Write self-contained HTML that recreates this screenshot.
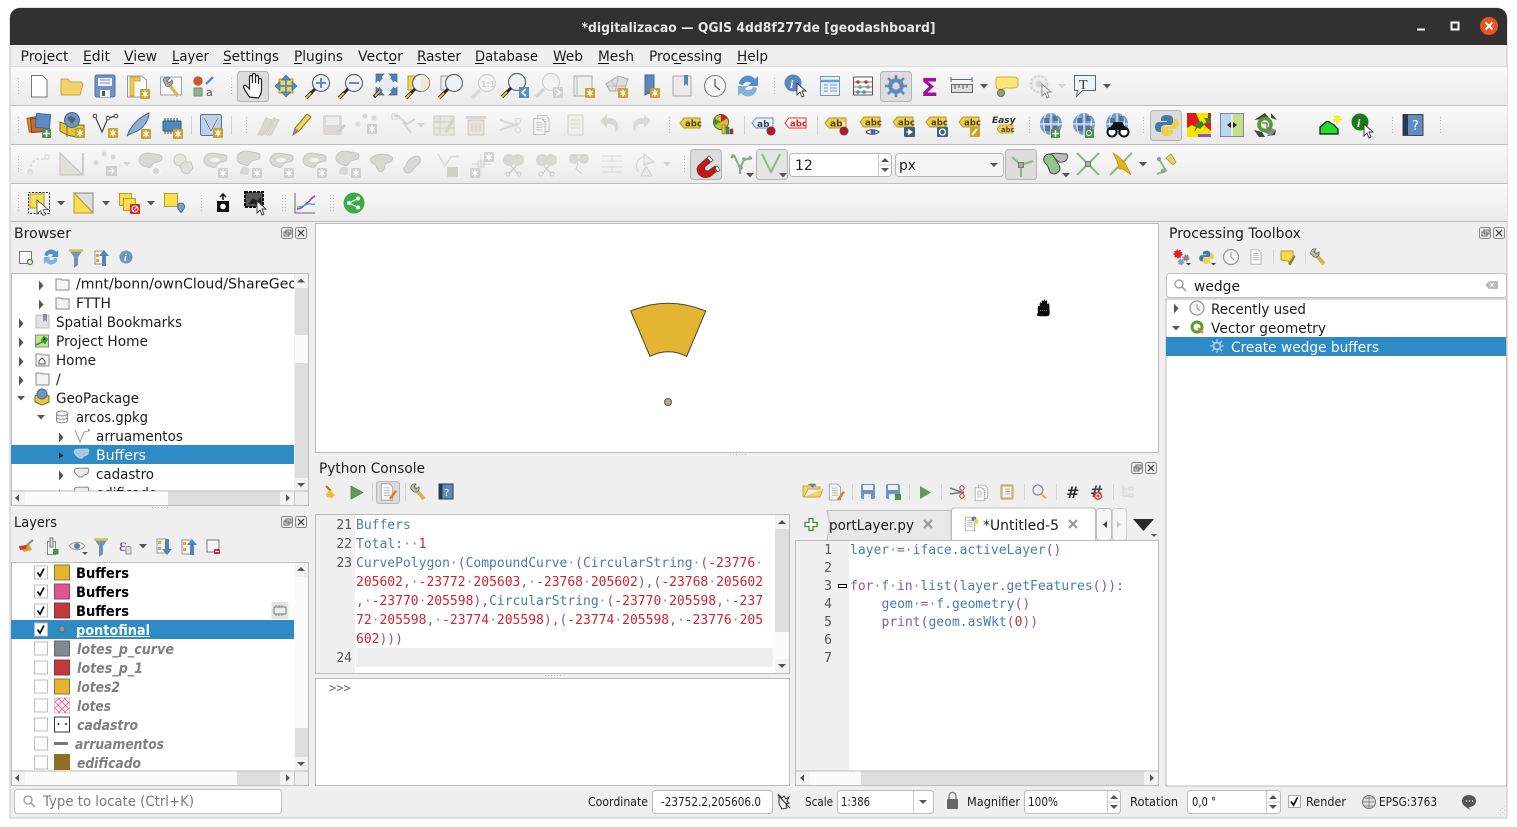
<!DOCTYPE html>
<html lang="en"><head><meta charset="utf-8"><title>QGIS</title>
<style>
html,body{margin:0;padding:0;background:#fff;width:1517px;height:827px;overflow:hidden}
svg{display:block}
text{font-family:"DejaVu Sans","Liberation Sans",sans-serif;font-size:14px;fill:#1c1c1c}
.m text,text.m{font-family:"DejaVu Sans Mono","Liberation Mono",monospace;font-size:13px;white-space:pre}
.s{font-size:12px}
.bl{fill:#4a7ab8}.pu{fill:#8a55a8}.re{fill:#cf2430}.dt{fill:#8a8a8a}
.gi{font-weight:bold;font-style:italic;fill:#7f7f7f;font-size:14px}
</style></head><body>
<svg width="1517" height="827" viewBox="0 0 1517 827" xmlns="http://www.w3.org/2000/svg">
<defs>
<linearGradient id="tb" x1="0" y1="0" x2="0" y2="1"><stop offset="0" stop-color="#f9f9f9"/><stop offset="1" stop-color="#ebebeb"/></linearGradient>
<pattern id="gp" width="3" height="3" patternUnits="userSpaceOnUse"><rect width="1" height="1" fill="#bdbdbd"/></pattern>
<clipPath id="cb"><rect x="11" y="274" width="283" height="217"/></clipPath>
<clipPath id="cl"><rect x="11" y="563" width="283" height="208"/></clipPath>
<clipPath id="ct"><rect x="827" y="508" width="124" height="32"/></clipPath>
<g id="star"><rect width="10" height="10" rx="1" fill="#c9a227"/><path d="M5 1.5v7M2 3l6 4M8 3L2 7" stroke="#fff" stroke-width="1.3"/></g>
<g id="sg"><rect width="10" height="10" rx="1" fill="#cfcfcb"/><path d="M5 1.5v7M2 3l6 4M8 3L2 7" stroke="#fff" stroke-width="1.3"/></g>
<path id="blob" d="M-11-4c3-5 10-4 14-3s8 0 8 4c0 5-5 3-8 5s-3 6-7 4C-10 5-14 1-11-4z" fill="#d8d8d5" stroke="#c6c6c2"/>
<g id="mag"><circle cx="3" cy="-3" r="8.5" fill="#eef1f5" stroke="#666" stroke-width="1.2"/><path d="M-3 3l-4 4" stroke="#222" stroke-width="3"/><path d="M-6 6l-6 6" stroke="#333" stroke-width="3.4"/><path d="M-7 7l-5 5" stroke="#e8c43a" stroke-width="1.8"/></g>
<g id="magd"><circle cx="3" cy="-3" r="8.5" fill="#f3f3f3" stroke="#d0d0d0" stroke-width="1.2"/><path d="M-4 4l-8 8" stroke="#d6d6d6" stroke-width="3.4"/></g>
<g id="lab"><path d="M-10 0l4-5h16v10h-16z" fill="#f0cf45" stroke="#b9952a"/><text x="-5" y="3.5" style="font-size:8.5px;font-weight:bold;fill:#4a4a30">abc</text></g>
<g id="pin"><path d="M0-7v5" stroke="#eee" stroke-width="3"/><circle cy="2" r="4.5" fill="#a5202b"/></g>
<g id="glb"><circle r="11" fill="#6f9bd6"/><path d="M-11 0h22M0-11v22M-5-10C-8-4-8 4-5 10M5-10C8-4 8 4 5 10" stroke="#e6edf7" stroke-width="1.2" fill="none"/><path d="M-7-6h5v5h-5zM2-8h5v5h-5zM-6 2h5v5h-5zM2 2h6v5h-6z" fill="#555" opacity=".6"/></g>
<g id="doc"><path d="M-7-10h10l4 4v16h-14z" fill="#fafafa" stroke="#999"/><path d="M-4-5h7M-4-2h8M-4 1h8M-4 4h8" stroke="#aaa"/></g>
<g id="fb"><rect x="-5.5" y="-5.5" width="11" height="11" rx="2" fill="#eee" stroke="#888"/></g>
<path id="ar" d="M0-2.5l4.500 5-4.500 5z" fill="#555"/>
<path id="ad" d="M-4 0h8l-4 4.500z" fill="#555"/>
<path id="tri" d="M-4-2h8l-4 4.500z" fill="#555"/>
<path id="trd" d="M-4-2h8l-4 4.500z" fill="#d4d4d4"/>
<g id="chk"><rect x="-6.5" y="-6.5" width="13" height="13" fill="#fff" stroke="#bdbdbd"/></g>
<path id="tick" d="M-3.500 0l2.500 3.500L3-4" fill="none" stroke="#111" stroke-width="1.800"/>
<g id="cur"><path d="M0 0v12l3-3 2 5 2-1-2-5h4z" fill="#fff" stroke="#333" stroke-width=".9"/></g>
<g id="cross"><path d="M-11-11L11 11M11-11L-11 11" stroke="#86bd84" stroke-width="2"/><rect x="-2.500" y="-2.500" width="5" height="5" fill="#aaa" stroke="#777"/></g>
<g id="vs"><path d="M-9-9L0 9L9-9" fill="none" stroke="#86bd84" stroke-width="2"/></g>
<g id="wr"><path d="M-8-8l12 14" stroke="#d6b64a" stroke-width="4"/><path d="M-9-4a4 4 0 0 1 5-5l-2 3 2 2 3-2a4 4 0 0 1-5 5z" fill="#bbb" stroke="#666" stroke-width=".8"/></g>
<g id="py"><path d="M0-10c-5 0-6 2-6 4v2h6v1h-8c-3 0-4 3-4 5s1 5 4 5h2v-3c0-3 2-4 4-4h5c2 0 3-1 3-3v-3c0-2-2-4-6-4z" fill="#3f7cae" transform="translate(1,0)"/><path d="M1 11c5 0 6-2 6-4V5H1V4h8c3 0 4-3 4-5s-1-5-4-5H7v3c0 3-2 4-4 4H-2c-2 0-3 1-3 3v3c0 2 2 4 6 4z" fill="#f0cf4d"/></g>
</defs>

<rect width="1517" height="827" fill="#fff"/>
<path d="M10 18a10 10 0 0 1 10-10h1477a10 10 0 0 1 10 10v800H10z" fill="#efefef" stroke="#c4c4c4"/>
<path d="M10 45V18a10 10 0 0 1 10-10h1477a10 10 0 0 1 10 10v27z" fill="#323030"/>
<text x="581.500" y="32" textLength="354" lengthAdjust="spacingAndGlyphs" style="font-weight:bold;font-size:13.5px;fill:#e6e6e6">*digitalizacao — QGIS 4dd8f277de [geodashboard]</text>
<rect x="1417" y="28.500" width="8" height="2" fill="#fff"/>
<rect x="1451.500" y="22.500" width="7" height="7" fill="none" stroke="#fff" stroke-width="2"/>
<circle cx="1489" cy="26" r="9" fill="#e95420"/><path d="M1485.500 22.500l7 7M1492.500 22.500l-7 7" stroke="#fff" stroke-width="2"/>

<g>
<text x="20.500" y="61" textLength="48" lengthAdjust="spacingAndGlyphs">Project</text>
<text x="83" y="61" textLength="27" lengthAdjust="spacingAndGlyphs">Edit</text>
<text x="124" y="61" textLength="33" lengthAdjust="spacingAndGlyphs">View</text>
<text x="172" y="61" textLength="37" lengthAdjust="spacingAndGlyphs">Layer</text>
<text x="223" y="61" textLength="56" lengthAdjust="spacingAndGlyphs">Settings</text>
<text x="294" y="61" textLength="49" lengthAdjust="spacingAndGlyphs">Plugins</text>
<text x="358" y="61" textLength="45" lengthAdjust="spacingAndGlyphs">Vector</text>
<text x="417" y="61" textLength="44" lengthAdjust="spacingAndGlyphs">Raster</text>
<text x="475" y="61" textLength="63" lengthAdjust="spacingAndGlyphs">Database</text>
<text x="553" y="61" textLength="30" lengthAdjust="spacingAndGlyphs">Web</text>
<text x="598" y="61" textLength="36" lengthAdjust="spacingAndGlyphs">Mesh</text>
<text x="649" y="61" textLength="73" lengthAdjust="spacingAndGlyphs">Processing</text>
<text x="737" y="61" textLength="31" lengthAdjust="spacingAndGlyphs">Help</text>
<path d="M43 63.500h5M83 63.500h8M124 63.500h10M172 63.500h7M223 63.500h8M294 63.500h8M389 63.500h7M417 63.500h9M475 63.500h9M553 63.500h13M598 63.500h11M674 63.500h7M737 63.500h10" stroke="#111" stroke-width="1"/>
</g>

<rect x="11" y="66" width="1496" height="39" fill="url(#tb)"/><rect x="11" y="106" width="1496" height="38" fill="url(#tb)"/><rect x="11" y="145" width="1496" height="38" fill="url(#tb)"/><rect x="11" y="184" width="1496" height="37" fill="url(#tb)"/>
<path d="M11 66.500h1496" stroke="#dcdcdc"/><path d="M11 105.500h1496M11 144.500h1496M11 183.500h1496M11 221.500h1496" stroke="#bcbcbc"/>
<g fill="url(#gp)">
<rect x="16" y="78" width="4" height="17"/><rect x="229" y="78" width="4" height="17"/><rect x="773" y="78" width="4" height="17"/>
<rect x="16" y="117" width="4" height="17"/><rect x="244" y="117" width="4" height="17"/><rect x="667" y="117" width="4" height="17"/><rect x="1027" y="117" width="4" height="17"/><rect x="1142" y="117" width="4" height="17"/><rect x="1390" y="117" width="4" height="17"/><rect x="1438" y="117" width="4" height="17"/>
<rect x="16" y="156" width="4" height="17"/><rect x="682" y="156" width="4" height="17"/>
<rect x="16" y="195" width="4" height="17"/><rect x="199" y="195" width="4" height="17"/><rect x="282" y="195" width="4" height="17"/><rect x="330" y="195" width="4" height="17"/>
</g>
<path d="M191.500 116v19M231.500 116v19M744.500 116v19M817.500 116v19" stroke="#d4d4d4"/>
<g fill="#dcdcdc" stroke="#b4b4b4">
<rect x="237.500" y="71.500" width="31" height="30" rx="3"/><rect x="880.500" y="71.500" width="31" height="30" rx="3"/><rect x="1150.500" y="110.500" width="31" height="30" rx="3"/><rect x="690.500" y="149.500" width="31" height="30" rx="3"/><rect x="756.500" y="149.500" width="31" height="30" rx="3" fill="#e4e4e4"/><rect x="1005.500" y="149.500" width="31" height="30" rx="3"/><rect x="376.500" y="481.500" width="23" height="22" rx="3"/>
</g>

<!-- TB1 -->
<path d="M31.500 75.500h11l4.500 4.500v17H31.500z" fill="#fff" stroke="#777"/>
<path d="M61 93V79h7l2 3h11l2 2-3 11H62z" fill="#f2d26e" stroke="#c9a53a"/>
<rect x="95" y="75" width="20" height="22" rx="2" fill="#6d94c3" stroke="#4e719c"/><path d="M98 78h14v8H98z" fill="#eef2f7"/><path d="M100 80h10M100 83h10" stroke="#7c93ad"/><rect x="100" y="90" width="10" height="7" fill="#f1f1f1"/><rect x="102" y="91" width="3" height="5" fill="#555"/>
<path d="M127.500 76h14l5 4v17h-19z" fill="#fafafa" stroke="#999"/><path d="M130 77h4v19h-4zM134 77h6v4h-6z" fill="#f1cf45" stroke="#b59a2c" stroke-width=".7"/><use href="#star" x="140" y="89"/>
<rect x="160.500" y="77" width="21" height="18" fill="#f8f8ff" stroke="#9aa6c0"/><path d="M167 82l11 14" stroke="#d9b84a" stroke-width="3.400"/><path d="M163 80a4.500 4.500 0 0 1 7-2l-3 3 2 2 3-3a4.500 4.500 0 0 1-6 6z" fill="#aaa" stroke="#666" stroke-width=".8"/>
<circle cx="198" cy="81" r="4.700" fill="#c8592a"/><rect x="194" y="88" width="8" height="8" fill="#8fb38d" stroke="#6f8f6d"/><path d="M206 84l7-7" stroke="#5b8bbb" stroke-width="2.400"/><text x="206" y="96" style="font-size:11px;fill:#555">a</text>
<path d="M249.500 97c-2-3-5-7-6-10 0-2 2-2 3-1l3 3V77c0-2 2.500-2 3 0v6-8c0-2 3-2 3 0v8-6c0-2 3-2 3 0v7-4c0-2 3-2 3 0v9c0 4-1 6-3 9z" fill="#fff" stroke="#222" stroke-width="1.200"/>
<rect x="279" y="79" width="14" height="14" fill="#f0d64a" stroke="#b99a2a"/><path d="M286 75l-4.500 5h9zM286 97l-4.500-5h9zM275 86l5-4.500v9zM297 86l-5-4.500v9z" fill="#5b8fc4" stroke="#3f6a99" stroke-width=".7"/><path d="M280 86h12M286 80v12" stroke="#5b8fc4" stroke-width="2"/>
<use href="#mag" x="318" y="86"/><path d="M316 83h10M321 78v10" stroke="#5b8fc4" stroke-width="2"/>
<use href="#mag" x="351" y="86"/><path d="M349 83h10" stroke="#5b8fc4" stroke-width="2"/>
<path d="M376 74h8l-3 3 3 3-3 3-3-3-2 2zM397 74h-8l3 3-3 3 3 3 3-3 2 2zM376 95h8l-3-3 3-3-3-3-3 3-2-2zM397 95h-8l3-3-3-3 3-3 3 3 2-2z" fill="#4f7eb3" stroke="#3f6a99" stroke-width=".7"/><circle cx="386.500" cy="84.500" r="7" fill="#e6ebf0"/><path d="M380 91l-6 6" stroke="#333" stroke-width="3.400"/><path d="M380 91l-5 5" stroke="#e8c43a" stroke-width="1.800"/>
<rect x="408" y="76" width="13" height="14" fill="#f0d64a" stroke="#b99a2a"/><use href="#mag" x="418" y="86"/><path d="M421 74.500a8.500 8.500 0 0 1 0 17z" fill="#ece7c8" opacity=".8"/>
<rect x="441" y="76" width="13" height="14" fill="#ececec" stroke="#999"/><use href="#mag" x="451" y="86"/>
<use href="#magd" x="484" y="86"/><text x="481" y="87" style="font-size:8px;font-weight:bold;fill:#cfcfcf">1:1</text>
<use href="#mag" x="514" y="85"/><rect x="519" y="87" width="10" height="11" fill="#5b8fc4"/><path d="M526 89l-4 3.500 4 3.500" fill="none" stroke="#fff" stroke-width="1.500"/>
<use href="#magd" x="548" y="85"/><rect x="553" y="87" width="10" height="11" fill="#d2d2d2"/><path d="M556 89l4 3.500-4 3.500" fill="none" stroke="#fff" stroke-width="1.500"/>
<path d="M574 76h18v20h-18z" fill="#eeeeec" stroke="#aaa"/><path d="M577 76v20" stroke="#bbb"/><use href="#star" x="585" y="88"/>
<path d="M606 84l12-8 10 3-4 12h-14z" fill="#ddd" stroke="#aaa"/><path d="M611 80l8 12M618 78l-3 14M608 86h18" stroke="#bbb"/><use href="#star" x="618" y="88"/>
<path d="M645 75h9v20l-5-2-4 2z" fill="#5b86b8" stroke="#3f6a99"/><use href="#star" x="650" y="88"/>
<path d="M673 76h18v20h-18z" fill="#ecebe8" stroke="#aaa"/><path d="M684 75h4v11l-2-2-2 2z" fill="#5b86b8"/>
<circle cx="715" cy="86" r="10.500" fill="#f4f6f8" stroke="#778"/><path d="M715 79v7l5 4" fill="none" stroke="#555" stroke-width="1.200"/>
<path d="M739 84a9 9 0 0 1 16-5l3-3v10h-10l3-3a5 5 0 0 0-8 2z" fill="#4f8fd0"/><path d="M757 88a9 9 0 0 1-16 5l-3 3V86h10l-3 3a5 5 0 0 0 8-2z" fill="#7fb0e0"/>
<circle cx="793" cy="83" r="8.500" fill="#5a87bd"/><text x="790" y="88" style="font-size:12px;font-weight:bold;font-style:italic;fill:#fff;font-family:'Liberation Serif',serif">i</text><use href="#cur" x="797" y="83"/>
<rect x="820.500" y="76.500" width="19" height="19" fill="#e9f0f9" stroke="#6e9bcc"/><path d="M821 81h18" stroke="#6e9bcc" stroke-width="2.500"/><path d="M824 85h4M830 85h7M824 88h4M830 88h7M824 91h4M830 91h7" stroke="#6e9bcc"/>
<rect x="853.500" y="77" width="19" height="18" fill="#fff" stroke="#555"/><path d="M854 82h18M854 87h18M854 92h18" stroke="#777"/><circle cx="858" cy="82" r="1.800" fill="#c33"/><circle cx="866" cy="82" r="1.800" fill="#c33"/><circle cx="860" cy="87" r="1.800" fill="#6a6"/><circle cx="868" cy="87" r="1.800" fill="#6a6"/><circle cx="858" cy="92" r="1.800" fill="#58a"/><circle cx="864" cy="92" r="1.800" fill="#58a"/>
<circle cx="896" cy="86" r="6" fill="none" stroke="#5b8ac0" stroke-width="3.500"/><path d="M896 75v22M885 86h22M888 78l16 16M904 78l-16 16" stroke="#5b8ac0" stroke-width="2.500"/><circle cx="896" cy="86" r="3.500" fill="#dcdcdc"/>
<text x="921" y="96" style="font-size:25px;fill:#a010a0;font-weight:bold">Σ</text>
<rect x="951.500" y="84.500" width="21" height="8" fill="#ddd" stroke="#666"/><path d="M951 79.500h21M951 77v5M972 77v5" stroke="#4a6c94"/><path d="M955 85v4M959 85v3M963 85v4M967 85v3" stroke="#555"/>
<use href="#tri" x="984" y="86"/>
<path d="M998 77h16c3 0 4 2 4 3v5c0 2-2 3-4 3h-9l-1 1h-6c-1 0-2-2-2-4v-5c0-2 0-3 2-3z" fill="#fbe77a" stroke="#d0b12f"/><circle cx="1001" cy="93" r="3.500" fill="#8ea86a" stroke="#666"/>
<circle cx="1039" cy="84" r="8" fill="#f0f0f0" stroke="#d6d6d6" stroke-width="2.500" stroke-dasharray="3 1"/><circle cx="1039" cy="84" r="3.500" fill="#d4d4d4"/><g opacity=".55"><use href="#cur" x="1042" y="84"/></g>
<use href="#trd" x="1062" y="86"/>
<path d="M1074.500 75.500h21v15h-13l-6 6 1-6h-3z" fill="#eef3f7" stroke="#5a6a72"/><text x="1079" y="89" style="font-size:14px;font-family:'Liberation Serif',serif;fill:#333">T</text>
<use href="#tri" x="1107" y="86"/>

<!-- TB2 -->
<rect x="28" y="117" width="14" height="14" fill="#e08a3a" stroke="#a05a20" transform="rotate(-10 35 124)"/><rect x="31" y="118" width="14" height="14" fill="#c46e2b" stroke="#804010" transform="rotate(-5 38 125)"/><rect x="36" y="114" width="14" height="14" fill="#5d8bc4" stroke="#3f6a99" transform="rotate(6 43 121)"/><rect x="42" y="129" width="9" height="9" rx="1" fill="#4c8f4a"/><path d="M46.500 130v7M43 133.500h7" stroke="#fff" stroke-width="1.500"/>
<path d="M60 122l8 3h16v10l-8 2-9-2-7-4z" fill="#e4c233" stroke="#7a6a20"/><path d="M67 125v12" stroke="#7a6a20"/><circle cx="72" cy="120" r="7.500" fill="#6f94c4" stroke="#46688f"/><path d="M67 118l4-2 5 3-4 5z" fill="#3b4d66" opacity=".7"/><use href="#star" x="75" y="128"/>
<path d="M95 116l7 16 6-14 8-2" fill="none" stroke="#444" stroke-width="1.200"/><circle cx="95" cy="116" r="1.800" fill="#fff" stroke="#444"/><circle cx="108" cy="118" r="1.800" fill="#fff" stroke="#444"/><circle cx="116" cy="116" r="1.800" fill="#fff" stroke="#444"/><use href="#star" x="108" y="128"/>
<path d="M127 136c3-8 10-18 22-23 0 7-6 16-14 19-3 1-6 2-8 4z" fill="#8db0d9" stroke="#4a6c94"/><use href="#star" x="141" y="129"/>
<rect x="163" y="121" width="18" height="10" rx="1" fill="#4f86bc" stroke="#2f5a88"/><path d="M165 118v3M168 118v3M171 118v3M174 118v3M177 118v3M165 131v3M168 131v3M171 131v3" stroke="#444"/><use href="#star" x="173" y="129"/>
<rect x="200.500" y="114.500" width="21" height="21" rx="2" fill="#bcd0e6" stroke="#52749c"/><path d="M204 118l7 13 7-13" fill="none" stroke="#fff" stroke-width="2"/><path d="M204 118l7 13 7-13" fill="none" stroke="#52749c"/><use href="#star" x="213" y="128"/>
<path d="M258 135l8-17 6 2-8 15zM266 135l8-17 5 2-8 15z" fill="#dbd8d3" stroke="#cfccc7"/>
<path d="M293 135l2-7 12-14 4 3-12 14z" fill="#f0d74c" stroke="#86722a"/><path d="M293 135l2-7 4 3z" fill="#888"/>
<rect x="323" y="115" width="19" height="20" rx="2" fill="#dbd8d5"/><rect x="326" y="117" width="13" height="8" fill="#eee"/><path d="M337 131l7-7 2 2-7 7z" fill="#d0cdc9"/>
<circle cx="365" cy="116" r="2.500" fill="#d8d8d5"/><circle cx="358" cy="124" r="2.500" fill="#d8d8d5"/><circle cx="374" cy="118" r="2.500" fill="#d8d8d5"/><use href="#sg" x="367" y="124"/>
<path d="M394 116h6M399 117l8 7 8-5M403 122l8 11" stroke="#d6d6d3" stroke-width="2" fill="none"/><rect x="392" y="114" width="5" height="5" fill="none" stroke="#d2d2d2"/>
<use href="#trd" x="421" y="125"/>
<rect x="434" y="116" width="20" height="19" fill="#e8e6e1" stroke="#d0cec9"/><path d="M434 122h20M434 128h20M440 116v19" stroke="#d0cec9"/><path d="M444 132l8-14 3 2-8 13z" fill="#d6d4cf"/>
<rect x="468" y="120" width="16" height="15" fill="#e6e2dd" stroke="#d0cbc5"/><rect x="466" y="116" width="20" height="3" fill="#d8d4ce"/><path d="M472 123v9M476 123v9M480 123v9" stroke="#d0cbc5"/>
<path d="M500 120l18 6M500 130l18-6" stroke="#d6d6d6" stroke-width="2"/><circle cx="518" cy="121" r="2.500" fill="none" stroke="#d6d6d6"/><circle cx="518" cy="130" r="2.500" fill="none" stroke="#d6d6d6"/>
<g transform="translate(541,125) scale(.8)"><use href="#doc" opacity=".7" y="-2" x="3"/><use href="#doc" opacity=".7" x="-2" y="2"/></g>
<rect x="568" y="115" width="15" height="20" rx="1" fill="#eeeeec" stroke="#d0d0cc"/><path d="M571 120h9M571 124h9M571 128h9" stroke="#d4d4d0"/>
<path d="M618 127a8 8 0 0 0-8-8h-3v-4l-7 7 7 7v-4h2c4 0 7 2 6 8 3-1 3-3 3-6z" fill="#dbd8d3" transform="translate(0,-1)"/>
<path d="M633 127a8 8 0 0 1 8-8h3v-4l7 7-7 7v-4h-2c-4 0-7 2-6 8-3-1-3-3-3-6z" fill="#dbdbd8" transform="translate(0,-1)"/>
<use href="#lab" x="690" y="123"/>
<circle cx="721" cy="122" r="7.500" fill="#d8c130" stroke="#555"/><path d="M721 122v-7.500a7.500 7.500 0 0 1 6 4z" fill="#c22"/><path d="M721 122l-6.500 3.500a7.500 7.500 0 0 1 0-7z" fill="#2d9a3d"/><rect x="722" y="125" width="3" height="9" fill="#e8c82a" stroke="#555" stroke-width=".5"/><rect x="726" y="127" width="3" height="7" fill="#2e9a3a" stroke="#555" stroke-width=".5"/><rect x="730" y="129" width="3" height="5" fill="#c22" stroke="#555" stroke-width=".5"/>
<path d="M752 123l4-5h17v10h-17z" fill="#ecf4ff" stroke="#5b8fc4"/><text x="757" y="127" style="font-size:9px;font-weight:bold;fill:#345">ab</text><use href="#pin" x="771" y="129"/>
<path d="M785 123l4-5h17v10h-17z" fill="#fff" stroke="#f03030"/><text x="790" y="126.500" style="font-size:8.500px;font-weight:bold;fill:#e02020">abc</text>
<g transform="translate(836,123)"><path d="M-11 0l4-5h17v10h-17z" fill="#f0cf45" stroke="#b9952a"/><text x="-6" y="3.500" style="font-size:9px;font-weight:bold;fill:#444">ab</text></g><use href="#pin" x="844" y="129"/>
<use href="#lab" x="870" y="122"/><path d="M866 132c3-3 9-3 13 0-4 3-10 3-13 0z" fill="#fff" stroke="#333"/><circle cx="873" cy="132" r="2.500" fill="#3a70b8"/>
<use href="#lab" x="903" y="122"/><rect x="904" y="127" width="11" height="10" rx="1" fill="#3f5f7f"/><path d="M906 132h4M908 129l4 3-4 3" stroke="#fff" fill="#fff"/>
<use href="#lab" x="936" y="122"/><rect x="937" y="127" width="11" height="10" rx="1" fill="#3f5f7f"/><circle cx="942.500" cy="132" r="3" fill="none" stroke="#fff" stroke-width="1.300"/>
<use href="#lab" x="969" y="122"/><rect x="970" y="127" width="10" height="10" rx="1" fill="#c9a227"/><path d="M972 135l5-6" stroke="#fff" stroke-width="2"/>
<text x="992" y="123" style="font-size:9px;font-weight:bold;font-style:italic;fill:#333">Easy</text><g transform="translate(1005,129) scale(.8)"><use href="#lab"/></g>
<use href="#glb" x="1051" y="124"/><rect x="1051" y="129" width="9" height="9" rx="1" fill="#4c8f4a"/><path d="M1055.500 130v7M1052 133.500h7" stroke="#fff" stroke-width="1.500"/>
<use href="#glb" x="1084" y="124"/><rect x="1085" y="129" width="9" height="9" rx="1" fill="#4c8f4a"/><circle cx="1089" cy="133" r="2.500" fill="none" stroke="#fff"/>
<use href="#glb" x="1117" y="124"/><circle cx="1112" cy="132" r="4.500" fill="#fff" stroke="#111" stroke-width="2"/><circle cx="1124" cy="132" r="4.500" fill="#fff" stroke="#111" stroke-width="2"/><path d="M1109 130l5-8h8l5 8z" fill="#111"/>
<use href="#py" x="1166" y="125"/>
<rect x="1187" y="113" width="24" height="24" fill="#e01818"/><path d="M1196 113h12v8l-6 4-3-5zM1190 137l8-10 6-2 7 6v6zM1187 128l5-3 4 2-4 10h-5z" fill="#f0e800"/><path d="M1204 118h7v5h-4zM1196 123l6-2 2 4-4 4-4-2z" fill="#2a8a2a"/><rect x="1198" y="134" width="13" height="3" fill="#9050c0"/>
<rect x="1220.500" y="113.500" width="23" height="23" fill="#bcd6ee" stroke="#7a8aa0"/><rect x="1232" y="114" width="11" height="22" fill="#c8dc8a"/><path d="M1232 114v22" stroke="#fff"/><path d="M1231 122l-4 3 4 3zM1233 122l4 3-4 3z" fill="#222"/>
<path d="M1254 120l11-7 4 5zM1277 120l-6-7v5zM1254 130l5 7 6 0-3-5zM1276 130l-9 6 8-1z" fill="#444"/><path d="M1262 131l9 5 5-6-5-2z" fill="#888"/><circle cx="1265" cy="124.500" r="6" fill="#eee" stroke="#5a962f" stroke-width="3.500"/><path d="M1262 123h5v5" fill="none" stroke="#555"/>
<path d="M1320 134l0-7 6-5c3-2 5 2 8 3l4 4 0 5z" fill="#22e02a" stroke="#111" stroke-width="1.200"/><path d="M1337 115v9M1333 119.500h9M1334 116l6 6M1340 116l-6 6" stroke="#f2ee20" stroke-width="1.800"/>
<circle cx="1360" cy="122" r="8.500" fill="#1a7a1a"/><text x="1357" y="127" style="font-size:12px;font-weight:bold;font-style:italic;fill:#fff;font-family:'Liberation Serif',serif">i</text><use href="#cur" x="1364" y="124"/>
<rect x="1403" y="114.500" width="20" height="21" fill="#5f8dbe" stroke="#445"/><rect x="1403" y="114.500" width="5" height="21" fill="#283a4c"/><text x="1412" y="130" style="font-size:13px;fill:#fff">?</text>

<!-- TB3 -->
<path d="M30 172c0-6 2-11 7-13h9" fill="none" stroke="#d8d8d8" stroke-width="1.500" stroke-dasharray="3 2"/><rect x="28" y="170" width="4" height="4" fill="none" stroke="#d4d4d4"/><rect x="45" y="155" width="4" height="4" fill="none" stroke="#d4d4d4"/>
<path d="M60 153l23 22H60z" fill="#e2dfda" stroke="#c4c1bb"/><path d="M83 175v-22" stroke="#cfccc7" stroke-width="2"/>
<circle cx="104" cy="154" r="2.500" fill="#d8d8d5"/><circle cx="96" cy="163" r="2.500" fill="#d8d8d5"/><circle cx="113" cy="157" r="2.500" fill="#d8d8d5"/><rect x="106" y="166" width="11" height="10" fill="#cfcfcb"/><path d="M108 171h5M111 168l3 3-3 3" stroke="#fff" fill="none"/>
<use href="#trd" x="127" y="164"/>
<use href="#blob" x="151" y="161"/><circle cx="156" cy="171" r="4" fill="#d6d6d3" stroke="#fff"/>
<circle cx="180" cy="160" r="6" fill="#e4e4e0" stroke="#c8c8c4"/><path d="M184 162l7 0 2 6-5 6-6-2-2-6z" fill="#e0e0dc" stroke="#c8c8c4"/>
<use href="#blob" x="216" y="161"/><ellipse cx="215" cy="160" rx="5" ry="2" fill="#f4f4f4"/><use href="#sg" x="218" y="168"/>
<use href="#blob" x="249" y="159"/><path d="M240 174c0-6 3-9 7-7 3 1 3 5 1 8z" fill="#d8d8d5"/><use href="#sg" x="252" y="168"/>
<use href="#blob" x="282" y="161"/><ellipse cx="281" cy="160" rx="5" ry="2" fill="#f4f4f4"/><use href="#sg" x="284" y="168"/>
<use href="#blob" x="315" y="161"/><ellipse cx="314" cy="160" rx="5" ry="2" fill="#f4f4f4"/><use href="#sg" x="317" y="168"/>
<use href="#blob" x="348" y="159"/><path d="M339 174c0-6 3-9 7-7 3 1 3 5 1 8z" fill="#d8d8d5"/><use href="#sg" x="351" y="168"/>
<path d="M371 158c6-5 16-5 21-1 2 3-2 6-6 6-2 3-1 8-6 9-4-3-3-7-6-8-2-1-4-3-3-6z" fill="#d8d8d5" stroke="#c6c6c2"/>
<path d="M404 168c3-2 2-6 6-9 4-3 8-4 10-1 2 3-1 6-4 8-3 3-4 7-8 7-3 0-5-3-4-5z" fill="#d8d8d5" stroke="#c6c6c2"/>
<path d="M438 154l7 12 6-9 8-1" fill="none" stroke="#d8d8d5" stroke-width="1.500"/><rect x="447" y="167" width="11" height="10" rx="1" fill="#cfcfcb"/>
<path d="M472 164h19M481 154v22" stroke="#d6d6d3"/><rect x="478" y="161" width="6" height="6" fill="none" stroke="#d2d2d2"/><use href="#sg" x="484" y="152"/><use href="#sg" x="470" y="168"/>
<circle cx="509" cy="160" r="6" fill="#d8d8d5"/><circle cx="518" cy="160" r="6" fill="#d8d8d5"/><path d="M511 166l7 8M516 166l-7 8" stroke="#ccc" stroke-width="1.200"/><circle cx="508" cy="174" r="2" fill="none" stroke="#ccc"/><circle cx="519" cy="174" r="2" fill="none" stroke="#ccc"/>
<circle cx="542" cy="160" r="6" fill="#d8d8d5"/><circle cx="551" cy="160" r="6" fill="#d8d8d5"/><path d="M544 166l7 8M549 166l-7 8" stroke="#ccc" stroke-width="1.200"/><circle cx="541" cy="174" r="2" fill="none" stroke="#ccc"/><circle cx="552" cy="174" r="2" fill="none" stroke="#ccc"/>
<circle cx="574" cy="159" r="5" fill="#d8d8d5"/><circle cx="584" cy="159" r="5" fill="#d8d8d5"/><path d="M570 155h18M578 163l-2 6 6 5" stroke="#ccc" fill="none"/>
<path d="M602 156h20M602 161h20M602 167h20M602 172h20M612 155v6M612 167v6" stroke="#d8d8d5"/>
<path d="M638 172c-3-7-1-14 5-15" fill="none" stroke="#d4d4d4"/><path d="M644 154l10 8-10 3zM641 176l5-10 6 10z" fill="#ebebe8" stroke="#d0d0cc"/>
<use href="#trd" x="667" y="164"/>
<path d="M698 166l11-10 4 4-8 7c-1 2 0 4 3 4l7-5 3 4-7 6c-6 4-14 0-14-7 0-1 1-2 1-3z" fill="#cc1515" stroke="#444" stroke-width=".8"/><path d="M709 156l4 4-2 2-4-4zM717 166l3 4-2 2-3-4z" fill="#fff" stroke="#444" stroke-width=".6"/>
<path d="M734 155l6 13 4-8 8-2M734 155l-3 3M740 168v6" fill="none" stroke="#7eb27b" stroke-width="2"/><circle cx="733" cy="156" r="1.800" fill="#999"/><circle cx="741" cy="168" r="1.800" fill="#999"/><circle cx="744" cy="159" r="1.800" fill="#999"/><circle cx="750" cy="158" r="1.800" fill="#999"/>
<use href="#tri" x="750" y="175"/>
<use href="#vs" x="771" y="163"/><use href="#tri" x="783" y="175"/>
<rect x="789.500" y="153.500" width="102" height="23" rx="3" fill="#fff" stroke="#b8b8b8"/><path d="M878.500 154v22M878.500 165h13" stroke="#ccc"/><path d="M881 162l4-4 4 4z M881 168l4 4 4-4z" fill="#555"/>
<text x="795" y="170">12</text>
<rect x="895.500" y="153.500" width="108" height="23" rx="3" fill="#f5f5f5" stroke="#b8b8b8"/><text x="899" y="170" textLength="17" lengthAdjust="spacingAndGlyphs">px</text><path d="M990 163h8l-4 4z" fill="#555"/>
<path d="M1021 165v12M1021 165l12-4M1021 165l-9-8" fill="none" stroke="#86bd84" stroke-width="2"/><rect x="1018.500" y="162.500" width="5" height="5" fill="#aaa" stroke="#777"/>
<path d="M1050 154c6-2 12 0 17 0 2 4-1 9-8 8z" fill="#bbb" stroke="#555"/><path d="M1044 158c1-5 8-5 10-1 2 4 5 6 6 11 0 5-6 7-9 5-3-3-2-7-5-9-2-2-3-4-2-6z" fill="#92c28f" stroke="#444"/><use href="#tri" x="1066" y="175"/>
<use href="#cross" x="1088" y="164"/>
<path d="M1110 175l22-22" stroke="#86bd84" stroke-width="2"/><path d="M1113 153l6 4 6 6 6 12-8-6-4 0-2-8z" fill="#e5b50f" stroke="#b88c10" stroke-width=".7"/>
<use href="#tri" x="1143" y="164"/>
<path d="M1159 159l7 12-9 3" fill="none" stroke="#86bd84" stroke-width="2"/><circle cx="1159" cy="159" r="2.200" fill="#999"/><circle cx="1163" cy="171" r="2.200" fill="#999"/><path d="M1166 158l5-4 5 8-3 3z" fill="#e8d34a" stroke="#887" stroke-width=".7"/>

<!-- TB4 -->
<rect x="28.500" y="192.500" width="21" height="21" fill="none" stroke="#333" stroke-dasharray="2 1.500"/><rect x="30" y="194" width="14" height="14" fill="#f7df4f" stroke="#b99a2a"/><path d="M37 200v14l3.500-3.500 2.500 5 2.500-1-2.500-5h5z" fill="#fff" stroke="#444" stroke-width=".8"/>
<use href="#tri" x="61" y="203"/>
<path d="M74 193h19v20z" fill="#ddd" stroke="#888"/><path d="M74 193l19 20H74z" fill="#f7df4f" stroke="#b99a2a"/>
<use href="#tri" x="106" y="203"/>
<rect x="119.500" y="193.500" width="12" height="12" fill="#f7df4f" stroke="#b99a2a"/><rect x="123.500" y="198.500" width="12" height="12" fill="#f7df4f" stroke="#b99a2a"/><rect x="130" y="204" width="10" height="10" rx="1" fill="#d62a2a"/><circle cx="135" cy="209" r="3" fill="none" stroke="#fff"/><path d="M133 211l4-4" stroke="#fff"/>
<use href="#tri" x="151" y="203"/>
<rect x="164.500" y="193.500" width="13" height="13" fill="#f7df4f" stroke="#b99a2a"/><path d="M181 203a3.500 3.500 0 0 1 3.500 3.500c0 2.500-3.500 6-3.500 6s-3.500-3.500-3.500-6A3.500 3.500 0 0 1 181 203z" fill="#7c9fbf" stroke="#4e6c88"/>
<rect x="217" y="201" width="12" height="11" fill="#111"/><circle cx="223" cy="206.500" r="2.800" fill="#fff"/><path d="M223 194v6M220 197l3-3 3 3" stroke="#111" fill="none" stroke-width="1.500"/>
<rect x="245" y="192" width="18" height="15" fill="#555" stroke="#111" stroke-dasharray="3 1" stroke-width="2"/><path d="M248 204l5-6 4 3 4-4v7z" fill="#222"/><use href="#cur" x="257" y="201"/>
<path d="M295 193v20h20" fill="none" stroke="#667"/><path d="M297 209c5 0 6-3 10-6 3-2 5-6 8-7" fill="none" stroke="#c02cb0" stroke-width="1.500"/><path d="M297 207c5 0 8-2 11-3s4 1 7 0" fill="none" stroke="#30b0c0" stroke-width="1.200"/>
<circle cx="354" cy="203" r="10.500" fill="#39ad48"/><circle cx="349" cy="203" r="2" fill="#fff"/><circle cx="358" cy="198.500" r="2" fill="#fff"/><circle cx="358" cy="207.500" r="2" fill="#fff"/><path d="M349 203l9-4.500M349 203l9 4.500" stroke="#fff" stroke-width="1.200"/>

<!-- Browser -->
<text x="14" y="238" textLength="57" lengthAdjust="spacingAndGlyphs">Browser</text>
<use href="#fb" x="287" y="233"/><rect x="284" y="232" width="5" height="4" fill="none" stroke="#666"/><rect x="286" y="230" width="5" height="4" fill="none" stroke="#666"/>
<use href="#fb" x="301" y="233"/><path d="M298 230l6 6M304 230l-6 6" stroke="#444" stroke-width="1.300"/>
<rect x="19.500" y="251.500" width="12" height="12" fill="#f8f8f8" stroke="#777"/><circle cx="30" cy="262" r="2.500" fill="#fff" stroke="#4a944a" stroke-width="1.500"/>
<g transform="translate(51,257) scale(.72)"><path d="M-9-2a9 9 0 0 1 16-5l3-3v10H0l3-3a5 5 0 0 0-8 2z" fill="#4f8fd0"/><path d="M9 2a9 9 0 0 1-16 5l-3 3V0H0l-3 3a5 5 0 0 0 8-2z" fill="#7fb0e0"/></g>
<path d="M69 250h14l-5 7v8l-4 3v-11z" fill="#6f93b8"/><path d="M69 250.500h14" stroke="#d8c44a" stroke-width="2.500"/>
<rect x="95" y="251" width="9" height="13" fill="#f5f5f5" stroke="#999"/><rect x="96" y="254" width="3" height="3" fill="#e8a030"/><rect x="96" y="259" width="3" height="3" fill="#e8a030"/><path d="M102 266v-10h-3l5-6 5 6h-3v10z" fill="#4f86bc"/>
<circle cx="126" cy="257" r="6.500" fill="#6a96c8"/><text x="124" y="261" style="font-size:10px;font-style:italic;font-weight:bold;fill:#fff;font-family:'Liberation Serif',serif">i</text>

<rect x="11.500" y="273.500" width="297" height="232" fill="#fff" stroke="#bcbcbc"/>
<rect x="294.500" y="274" width="13.500" height="217" fill="#dedede"/><rect x="295" y="274" width="13" height="14" fill="#f3f3f3"/><rect x="295" y="335" width="13" height="28" fill="#fbfbfb"/><rect x="295" y="478" width="13" height="13" fill="#f3f3f3"/><path d="M297 282.500l4-4 4 4zM297 483l4 4 4-4z" fill="#555"/>
<rect x="12" y="491" width="296" height="14" fill="#dedede"/><rect x="25" y="491" width="143" height="14" fill="#fbfbfb"/><rect x="12" y="491" width="13" height="14" fill="#f3f3f3"/><rect x="280" y="491" width="14" height="14" fill="#f3f3f3"/><rect x="295" y="491" width="13" height="14" fill="#efefef"/><path d="M12 491h296" stroke="#bcbcbc"/><path d="M294.500 491v14" stroke="#ccc"/><path d="M19 494.500l-4 3.500 4 3.500zM286 494.500l4 3.500-4 3.500z" fill="#555"/>
<g clip-path="url(#cb)">
<rect x="11" y="445" width="283" height="19" fill="#2e8bc6"/>
<use href="#ar" x="39" y="283"/><use href="#ar" x="39" y="302"/><use href="#ar" x="19" y="321"/><use href="#ar" x="19" y="340"/><use href="#ar" x="19" y="359"/><use href="#ar" x="19" y="378"/><use href="#ad" x="21" y="396"/><use href="#ad" x="41" y="415"/><use href="#ar" x="59" y="435"/><path d="M59 452.500l4.500 3-4.500 3z" fill="#222"/><use href="#ar" x="59" y="473"/><use href="#ar" x="59" y="492"/>
<path d="M56 279h5l1 1h7v10H56z" fill="#f4f4f4" stroke="#8a8a8a"/><path d="M56 298h5l1 1h7v10H56z" fill="#f4f4f4" stroke="#8a8a8a"/>
<path d="M36 315h13v13H36z" fill="#e3e3e3" stroke="#bbb"/><path d="M43 314h4v8l-2-2-2 2z" fill="#7a95b8"/>
<rect x="35.500" y="335" width="13" height="12" fill="#c8e38a" stroke="#888"/><path d="M44 337l3 2-2 4-3-3zM36 345l10-5" stroke="#2b9a3a" stroke-width="1.800"/>
<path d="M36 354h5l1 1h7v11H36z" fill="#f4f4f4" stroke="#8a8a8a"/><path d="M39 361l3-3 3 3v3h-6z" fill="#fff" stroke="#555"/>
<path d="M36 373h5l1 1h7v11H36z" fill="#f4f4f4" stroke="#8a8a8a"/>
<path d="M35 396l7-3 7 3v6l-7 3-7-3z" fill="#e7c93b" stroke="#7a6a20"/><circle cx="42" cy="394" r="5" fill="#6f94c4" stroke="#46688f"/>
<ellipse cx="62" cy="413.500" rx="5.500" ry="2.500" fill="#f3f3f3" stroke="#888"/><path d="M56.500 413.500v7c0 3 11 3 11 0v-7M56.500 417c0 3 11 3 11 0" fill="none" stroke="#888"/>
<path d="M75 430l5 12 4-10 5-1" fill="none" stroke="#999"/><circle cx="89" cy="430" r="1" fill="#888"/>
<path d="M75 450c3-2 9 0 12-1 2 0 2 3 1 5s-4 1-5 3-4 1-5 0c-2-2-5-4-3-7z" fill="#a8c8de" stroke="#bcd"/>
<path d="M75 469c3-2 9 0 12-1 2 0 2 3 1 5s-4 1-5 3-4 1-5 0c-2-2-5-4-3-7z" fill="#ececec" stroke="#888"/>
<path d="M75 488c3-2 9 0 12-1 2 0 2 3 1 5s-4 1-5 3-4 1-5 0c-2-2-5-4-3-7z" fill="#ececec" stroke="#888"/>
<text x="76" y="288.500" textLength="221" lengthAdjust="spacingAndGlyphs">/mnt/bonn/ownCloud/ShareGeo</text>
<text x="76" y="308" textLength="35" lengthAdjust="spacingAndGlyphs">FTTH</text>
<text x="56" y="327" textLength="126" lengthAdjust="spacingAndGlyphs">Spatial Bookmarks</text>
<text x="56" y="346" textLength="92" lengthAdjust="spacingAndGlyphs">Project Home</text>
<text x="56" y="365" textLength="40" lengthAdjust="spacingAndGlyphs">Home</text>
<text x="56" y="384">/</text>
<text x="56" y="403" textLength="83" lengthAdjust="spacingAndGlyphs">GeoPackage</text>
<text x="76" y="422" textLength="72" lengthAdjust="spacingAndGlyphs">arcos.gpkg</text>
<text x="96" y="441" textLength="87" lengthAdjust="spacingAndGlyphs">arruamentos</text>
<text x="96" y="460" textLength="50" lengthAdjust="spacingAndGlyphs" style="fill:#fff">Buffers</text>
<text x="96" y="479" textLength="58" lengthAdjust="spacingAndGlyphs">cadastro</text>
<text x="96" y="498" textLength="61" lengthAdjust="spacingAndGlyphs">edificado</text>
</g>
<path d="M152 507.500h16" stroke="#bbb" stroke-dasharray="1 2"/>

<!-- Layers -->
<text x="14" y="527" textLength="43" lengthAdjust="spacingAndGlyphs">Layers</text>
<use href="#fb" x="287" y="522"/><rect x="284" y="521" width="5" height="4" fill="none" stroke="#666"/><rect x="286" y="519" width="5" height="4" fill="none" stroke="#666"/>
<use href="#fb" x="301" y="522"/><path d="M298 519l6 6M304 519l-6 6" stroke="#444" stroke-width="1.300"/>
<path d="M20 547l9-3 3 6-8 2z" fill="#d8a030"/><path d="M19 546l8-1-1 4-6 1z" fill="#c8402a"/><path d="M27 545l6-5" stroke="#888" stroke-width="2"/>
<rect x="47.500" y="541.500" width="8" height="13" fill="#f5f5f5" stroke="#888"/><path d="M50 538h3v9h-3z" fill="#ddd" stroke="#777"/><rect x="53" y="549" width="5.500" height="5.500" fill="#4a944a"/>
<path d="M69 546c4-5 12-5 16 0-4 5-12 5-16 0z" fill="#e8e8e8" stroke="#999"/><circle cx="77" cy="546" r="3" fill="#5a80aa"/><path d="M82 552h6l-3 3z" fill="#555"/>
<path d="M94 539h14l-5 7v8l-4 3v-11z" fill="#6f93b8"/><path d="M94 539.500h14" stroke="#d8c44a" stroke-width="2.500"/>
<text x="119" y="551" style="font-size:18px;fill:#6e4e8e;font-family:'Liberation Serif',serif">ε</text><path d="M126 548c0-2 5-2 5 0l0 6h-5z" fill="#ddd" stroke="#999"/>
<use href="#tri" x="143" y="546"/>
<rect x="157" y="539" width="9" height="14" fill="#f5f5f5" stroke="#999"/><rect x="158" y="541" width="3" height="3" fill="#e8a030"/><rect x="158" y="547" width="3" height="3" fill="#e8a030"/><path d="M165 539v10h-3l5 6 5-6h-3v-10z" fill="#4f86bc"/>
<rect x="182" y="540" width="9" height="14" fill="#f5f5f5" stroke="#999"/><rect x="183" y="542" width="3" height="3" fill="#e8a030"/><rect x="183" y="548" width="3" height="3" fill="#e8a030"/><path d="M190 555v-10h-3l5-6 5 6h-3v10z" fill="#4f86bc"/>
<rect x="207" y="540" width="12" height="12" fill="#f8f8f8" stroke="#777"/><rect x="214" y="549" width="6" height="5" rx="1" fill="#d62a2a"/><path d="M215 551.500h4" stroke="#fff"/>

<rect x="11.500" y="562.500" width="297" height="223" fill="#fff" stroke="#bcbcbc"/>
<rect x="294.500" y="563" width="13.500" height="208" fill="#fafafa"/><rect x="295" y="728" width="13" height="29" fill="#dedede"/><rect x="295" y="563" width="13" height="14" fill="#f3f3f3"/><rect x="295" y="757" width="13" height="14" fill="#f3f3f3"/><path d="M297 571l4-4 4 4zM297 762l4 4 4-4z" fill="#555"/>
<rect x="12" y="771" width="296" height="14" fill="#dedede"/><rect x="25" y="771" width="212" height="14" fill="#fbfbfb"/><rect x="12" y="771" width="13" height="14" fill="#f3f3f3"/><rect x="280" y="771" width="14" height="14" fill="#f3f3f3"/><rect x="295" y="771" width="13" height="14" fill="#efefef"/><path d="M12 771h296" stroke="#bcbcbc"/><path d="M294.500 771v14" stroke="#ccc"/><path d="M19 774.500l-4 3.500 4 3.500zM286 774.500l4 3.500-4 3.500z" fill="#555"/>
<g clip-path="url(#cl)">
<rect x="11" y="620" width="283" height="19" fill="#2e8bc6"/>
<use href="#chk" x="41" y="572.500"/><use href="#tick" x="41" y="572.500"/><use href="#chk" x="41" y="591.500"/><use href="#tick" x="41" y="591.500"/><use href="#chk" x="41" y="610.500"/><use href="#tick" x="41" y="610.500"/><use href="#chk" x="41" y="629.500"/><use href="#tick" x="41" y="629.500"/>
<use href="#chk" x="41" y="648.500"/><use href="#chk" x="41" y="667.500"/><use href="#chk" x="41" y="686.500"/><use href="#chk" x="41" y="705.500"/><use href="#chk" x="41" y="724.500"/><use href="#chk" x="41" y="743.500"/><use href="#chk" x="41" y="762.500"/>
<rect x="54.500" y="565" width="15" height="15" fill="#e4b433" stroke="#8a7a3c"/>
<rect x="54.500" y="584" width="15" height="15" fill="#e2558f" stroke="#8a4a66"/>
<rect x="54.500" y="603" width="15" height="15" fill="#c43a3a" stroke="#803838"/>
<circle cx="62" cy="629" r="3" fill="#8a9aa2" stroke="#667"/>
<rect x="54.500" y="641" width="15" height="15" fill="#7f8b90" stroke="#666"/>
<rect x="54.500" y="660" width="15" height="15" fill="#c43a3a" stroke="#803838"/>
<rect x="54.500" y="679" width="15" height="15" fill="#e4b433" stroke="#8a7a3c"/>
<rect x="54.500" y="698" width="15" height="15" fill="#fbeef2" stroke="#ccc"/><path d="M55 702l5-4M55 708l11-10M58 713l11-11M64 713l5-5M55 702l11 11M55 708l5 5M58 698l11 11M64 698l5 5" stroke="#e2558f" stroke-width=".8"/>
<rect x="54.500" y="717" width="15" height="15" fill="#fff" stroke="#333"/><circle cx="58.500" cy="724" r="1" fill="#222"/><circle cx="66" cy="724" r="1" fill="#222"/>
<rect x="54" y="742" width="14" height="3" fill="#777"/>
<rect x="54" y="754" width="16" height="16" fill="#8f6f22"/>
<text x="76" y="578" textLength="53" lengthAdjust="spacingAndGlyphs" style="font-weight:bold;fill:#000">Buffers</text>
<text x="76" y="597" textLength="53" lengthAdjust="spacingAndGlyphs" style="font-weight:bold;fill:#000">Buffers</text>
<text x="76" y="616" textLength="53" lengthAdjust="spacingAndGlyphs" style="font-weight:bold;fill:#000">Buffers</text>
<text x="76" y="635" textLength="74" lengthAdjust="spacingAndGlyphs" style="font-weight:bold;fill:#fff">pontofinal</text>
<path d="M76 636.500h74" stroke="#fff"/>
<text class="gi" x="77" y="654" textLength="97" lengthAdjust="spacingAndGlyphs">lotes_p_curve</text>
<text class="gi" x="77" y="673" textLength="66" lengthAdjust="spacingAndGlyphs">lotes_p_1</text>
<text class="gi" x="77" y="692" textLength="43" lengthAdjust="spacingAndGlyphs">lotes2</text>
<text class="gi" x="77" y="711" textLength="34" lengthAdjust="spacingAndGlyphs">lotes</text>
<text class="gi" x="77" y="730" textLength="61" lengthAdjust="spacingAndGlyphs">cadastro</text>
<text class="gi" x="75" y="749" textLength="89" lengthAdjust="spacingAndGlyphs">arruamentos</text>
<text class="gi" x="77" y="768" textLength="64" lengthAdjust="spacingAndGlyphs">edificado</text>
<rect x="271.500" y="602" width="17" height="17" rx="1" fill="#e3e3e3"/><rect x="274" y="607" width="12" height="7" rx="1" fill="#eee" stroke="#777"/><path d="M276 605v2M279 605v2M282 605v2M276 614v2M279 614v2M282 614v2" stroke="#888"/>
</g>

<!-- Locator -->
<rect x="14.500" y="789.500" width="267" height="24" rx="3" fill="#fff" stroke="#c0c0c0"/>
<circle cx="28" cy="800" r="4" fill="none" stroke="#999" stroke-width="1.300"/><path d="M31 803l4 4" stroke="#999" stroke-width="1.500"/>
<text x="43" y="806" textLength="151" lengthAdjust="spacingAndGlyphs" style="fill:#7a7a7a">Type to locate (Ctrl+K)</text>

<!-- Map -->
<rect x="315.500" y="223.500" width="843" height="229" fill="#fff" stroke="#bcbcbc"/>
<path d="M630.700 311Q668.300 295.600 705.700 311L686.700 356.300Q668.300 347.100 650 356.300Z" fill="#e4b433" stroke="#4a4436"/>
<circle cx="668" cy="402" r="3.500" fill="#bcab8c" stroke="#555"/>
<path d="M1037.500 313v-6c0-1 1-1.500 2-1.500v-2.500c0-1 2-1 2 0v-2c0-1 2-1 2 0v-1c0-1 2-1 2 0v1c0-1 2-1 2 0v3c0-1 2-1 2 0l.5 9c0 2-1 3.500-3 3.500h-7c-2 0-3.500-.5-3.500-1.500z" fill="#0c0c0c" stroke="#fff" stroke-width=".6"/><path d="M1040 310.500h8" stroke="#777" stroke-dasharray="1 1"/>
<path d="M730 454.500h16" stroke="#bbb" stroke-dasharray="1 2"/>

<!-- Python Console -->
<text x="319" y="473" textLength="106" lengthAdjust="spacingAndGlyphs">Python Console</text>
<use href="#fb" x="1137" y="468"/><rect x="1134" y="467" width="5" height="4" fill="none" stroke="#666"/><rect x="1136" y="465" width="5" height="4" fill="none" stroke="#666"/>
<use href="#fb" x="1151" y="468"/><path d="M1148 465l6 6M1154 465l-6 6" stroke="#444" stroke-width="1.300"/>
<path d="M326 486l5 5" stroke="#c0672a" stroke-width="2"/><path d="M330 490l5 5-3 3-5-1-1-3z" fill="#edc12c"/>
<path d="M351 486l12 6.500-12 6.500z" fill="#5f9a5a" stroke="#477544" stroke-width=".7"/>
<path d="M372.500 483v18M405.500 483v18" stroke="#d4d4d4"/>
<g transform="translate(387,492) scale(.82)"><use href="#doc"/></g><path d="M389 498l6-8 2 1.500-6 8z" fill="#e07a28"/>
<use href="#wr" x="420" y="493"/>
<rect x="439" y="484" width="14" height="15" fill="#5f8dbe" stroke="#334"/><rect x="439" y="484" width="3.500" height="15" fill="#283a4c"/><text x="444" y="496" style="font-size:10px;fill:#fff">?</text>

<rect x="315.500" y="514.500" width="474" height="159" fill="#fff" stroke="#bcbcbc"/>
<rect x="316" y="515" width="39" height="158" fill="#f0f0f0"/>
<rect x="356" y="648" width="417" height="19" fill="#eeeeee"/>
<rect x="775" y="515" width="14" height="158" fill="#fbfbfb"/><rect x="775" y="529" width="14" height="103" fill="#dedede"/><rect x="775" y="515" width="14" height="14" fill="#f3f3f3"/><rect x="775" y="659" width="14" height="14" fill="#f3f3f3"/><path d="M778 524l4-4 4 4zM778 664l4 4 4-4z" fill="#555"/>
<g class="m">
<text x="352" y="529" text-anchor="end" style="fill:#555">21</text>
<text x="352" y="548" text-anchor="end" style="fill:#555">22</text>
<text x="352" y="567" text-anchor="end" style="fill:#555">23</text>
<text x="352" y="662" text-anchor="end" style="fill:#555">24</text>
<text x="356" y="529" class="bl">Buffers</text>
<text x="356" y="548"><tspan class="bl">Total:</tspan><tspan class="dt">··</tspan><tspan class="re">1</tspan></text>
<text x="356" y="567"><tspan class="bl">CurvePolygon</tspan><tspan class="dt">·</tspan><tspan class="pu">(</tspan><tspan class="bl">CompoundCurve</tspan><tspan class="dt">·</tspan><tspan class="pu">(</tspan><tspan class="bl">CircularString</tspan><tspan class="dt">·</tspan><tspan class="pu">(</tspan><tspan class="re">-23776</tspan><tspan class="dt">·</tspan></text>
<text x="356" y="586"><tspan class="re">205602</tspan><tspan class="pu">,</tspan><tspan class="dt">·</tspan><tspan class="re">-23772</tspan><tspan class="dt">·</tspan><tspan class="re">205603</tspan><tspan class="pu">,</tspan><tspan class="dt">·</tspan><tspan class="re">-23768</tspan><tspan class="dt">·</tspan><tspan class="re">205602</tspan><tspan class="pu">),(</tspan><tspan class="re">-23768</tspan><tspan class="dt">·</tspan><tspan class="re">205602</tspan></text>
<text x="356" y="605"><tspan class="pu">,</tspan><tspan class="dt">·</tspan><tspan class="re">-23770</tspan><tspan class="dt">·</tspan><tspan class="re">205598</tspan><tspan class="pu">),</tspan><tspan class="bl">CircularString</tspan><tspan class="dt">·</tspan><tspan class="pu">(</tspan><tspan class="re">-23770</tspan><tspan class="dt">·</tspan><tspan class="re">205598</tspan><tspan class="pu">,</tspan><tspan class="dt">·</tspan><tspan class="re">-237</tspan></text>
<text x="356" y="624"><tspan class="re">72</tspan><tspan class="dt">·</tspan><tspan class="re">205598</tspan><tspan class="pu">,</tspan><tspan class="dt">·</tspan><tspan class="re">-23774</tspan><tspan class="dt">·</tspan><tspan class="re">205598</tspan><tspan class="pu">),(</tspan><tspan class="re">-23774</tspan><tspan class="dt">·</tspan><tspan class="re">205598</tspan><tspan class="pu">,</tspan><tspan class="dt">·</tspan><tspan class="re">-23776</tspan><tspan class="dt">·</tspan><tspan class="re">205</tspan></text>
<text x="356" y="643"><tspan class="re">602</tspan><tspan class="pu">)))</tspan></text>
</g>
<path d="M545 675.500h16" stroke="#bbb" stroke-dasharray="1 2"/>
<rect x="315.500" y="678.500" width="474" height="107" fill="#fff" stroke="#bcbcbc"/>
<text class="m" x="329" y="692" style="font-size:12px;fill:#666">&gt;&gt;&gt;</text>

<!-- right toolbar -->
<path d="M803 497v-11h5l2-2h5l1 3h4v2h-12l-4 8h16l3-8" fill="#f1d36c" stroke="#c9a53a"/><path d="M808 484h8l-3 4z" fill="#4f86bc"/>
<g transform="translate(835,492) scale(.8)"><use href="#doc"/></g><path d="M837 499l6-8 2 1.500-6 8z" fill="#e07a28"/>
<rect x="861" y="484" width="14" height="15" rx="2" fill="#6d94c3"/><rect x="863" y="485" width="10" height="5" fill="#eef2f7"/><rect x="864" y="494" width="7" height="5" fill="#eee"/>
<rect x="886" y="484" width="14" height="15" rx="2" fill="#6d94c3"/><rect x="888" y="485" width="10" height="5" fill="#eef2f7"/><rect x="889" y="494" width="7" height="5" fill="#eee"/><rect x="895" y="494" width="6" height="6" fill="#4a944a"/>
<path d="M920 486l11 6.500-11 6.500z" fill="#5f9a5a"/>
<path d="M852.500 484v16M909.500 484v16M941.500 484v16M1024.500 484v16M1056.500 484v16M1113.500 484v16" stroke="#d4d4d4"/>
<path d="M950 488l14 5M950 494l14-2" stroke="#777" stroke-width="1.500"/><circle cx="962" cy="488" r="2.200" fill="none" stroke="#b33"/><circle cx="962" cy="496" r="2.200" fill="none" stroke="#b33"/>
<g transform="translate(981,493) scale(.65)"><use href="#doc" x="3" y="-2"/><use href="#doc" x="-2" y="2"/></g>
<rect x="1001" y="485" width="12" height="14" rx="1" fill="#d8c8a8" stroke="#c09a50"/><rect x="1003" y="487" width="8" height="10" fill="#f8f8f8"/><path d="M1005 489h5M1005 491.500h5M1005 494h5" stroke="#aaa"/>
<circle cx="1038" cy="490" r="5" fill="#eef1f5" stroke="#777"/><path d="M1041 494l5 4" stroke="#d8b82a" stroke-width="2"/>
<text x="1066" y="498" style="font-size:16px;fill:#333;font-weight:bold">#</text>
<text x="1090" y="497" style="font-size:16px;fill:#444;font-weight:bold">#</text><circle cx="1098" cy="496" r="4" fill="#e23a3a"/><circle cx="1098" cy="496" r="2" fill="none" stroke="#fff"/>
<path d="M1123 485v11h6M1123 489h6M1129 487h4v3h-4zM1129 494h4v3h-4z" stroke="#d6d6d6" fill="#e8e8e8"/>

<!-- tabs -->
<path d="M807 520.500v-4h4v4h4v4h-4v4h-4v-4h-4v-4z" transform="translate(2,2)" fill="#fff" stroke="#3e8a3e" stroke-width="1.300"/>
<path d="M827 510.500h124v30H827l3-15z" fill="#e8e8e8" stroke="#bcbcbc"/>
<g clip-path="url(#ct)"><text x="829" y="530" textLength="85" lengthAdjust="spacingAndGlyphs">portLayer.py</text></g>
<path d="M924 520l8 8M932 520l-8 8" stroke="#9a9a9a" stroke-width="2.200"/>
<path d="M951.500 541v-30c0-2 1-3 3-3h138c2 0 3 1 3 3v30" fill="#fff" stroke="#bcbcbc"/>
<g transform="translate(970,524) scale(.68)"><use href="#doc"/></g><circle cx="974" cy="519" r="2.500" fill="#4f86bc"/><circle cx="976" cy="521.500" r="2.500" fill="#f0cf4d"/>
<text x="983" y="530" textLength="76" lengthAdjust="spacingAndGlyphs">*Untitled-5</text>
<path d="M1069 520l8 8M1077 520l-8 8" stroke="#9a9a9a" stroke-width="2.200"/>
<rect x="1096.500" y="508.500" width="15" height="32" rx="3" fill="#f6f6f6" stroke="#bcbcbc"/><rect x="1112.500" y="508.500" width="14" height="32" rx="3" fill="#f6f6f6" stroke="#d0d0d0"/><path d="M1107 521l-4 3.500 4 3.500z" fill="#444"/><path d="M1117 521l4 3.500-4 3.500z" fill="#c8c8c8"/>
<path d="M1133 519h21l-10.500 12z" fill="#2b2b2b"/><path d="M1151 534h6l-3 3z" fill="#555"/>

<!-- right editor -->
<rect x="795.500" y="540.500" width="363" height="245" fill="#fff" stroke="#bcbcbc"/>
<rect x="796" y="541" width="53" height="230" fill="#f0f0f0"/>
<rect x="796" y="771" width="362" height="14" fill="#dedede"/><rect x="810" y="771" width="51" height="14" fill="#fbfbfb"/><rect x="796" y="771" width="14" height="14" fill="#f3f3f3"/><rect x="1144" y="771" width="14" height="14" fill="#f3f3f3"/><path d="M796 771h362" stroke="#bcbcbc"/><path d="M804 774.500l-4 3.500 4 3.500zM1150 774.500l4 3.500-4 3.500z" fill="#555"/>
<g class="m">
<text x="832" y="554" text-anchor="end" style="fill:#555">1</text>
<text x="832" y="572" text-anchor="end" style="fill:#555">2</text>
<text x="832" y="590" text-anchor="end" style="fill:#555">3</text>
<text x="832" y="608" text-anchor="end" style="fill:#555">4</text>
<text x="832" y="626" text-anchor="end" style="fill:#555">5</text>
<text x="832" y="644" text-anchor="end" style="fill:#555">6</text>
<text x="832" y="662" text-anchor="end" style="fill:#555">7</text>
<text x="850" y="554"><tspan class="bl">layer</tspan><tspan class="dt">·</tspan><tspan class="pu">=</tspan><tspan class="dt">·</tspan><tspan class="bl">iface.activeLayer</tspan><tspan class="pu">()</tspan></text>
<text x="850" y="590"><tspan class="pu">for</tspan><tspan class="dt">·</tspan><tspan class="bl">f</tspan><tspan class="dt">·</tspan><tspan class="pu">in</tspan><tspan class="dt">·</tspan><tspan class="bl">list</tspan><tspan class="pu">(</tspan><tspan class="bl">layer.getFeatures</tspan><tspan class="pu">()):</tspan></text>
<text x="881.500" y="608"><tspan class="bl">geom</tspan><tspan class="dt">·</tspan><tspan class="pu">=</tspan><tspan class="dt">·</tspan><tspan class="bl">f.geometry</tspan><tspan class="pu">()</tspan></text>
<text x="881.500" y="626"><tspan class="pu">print(</tspan><tspan class="bl">geom.asWkt</tspan><tspan class="pu">(</tspan><tspan class="re">0</tspan><tspan class="pu">))</tspan></text>
</g>
<rect x="838.500" y="584.500" width="8" height="3" fill="#fff" stroke="#000"/>

<!-- Processing Toolbox -->
<text x="1169" y="238" textLength="132" lengthAdjust="spacingAndGlyphs">Processing Toolbox</text>
<use href="#fb" x="1485" y="233"/><rect x="1482" y="232" width="5" height="4" fill="none" stroke="#666"/><rect x="1484" y="230" width="5" height="4" fill="none" stroke="#666"/>
<use href="#fb" x="1499" y="233"/><path d="M1496 230l6 6M1502 230l-6 6" stroke="#444" stroke-width="1.300"/>
<circle cx="1178" cy="254" r="3.500" fill="#d22" stroke="#d22" stroke-width="2" stroke-dasharray="1.500 1"/><circle cx="1186" cy="258" r="2.500" fill="#888" stroke="#888" stroke-width="2" stroke-dasharray="1.500 1"/><circle cx="1181" cy="262" r="2.500" fill="#7a9fd0" stroke="#7a9fd0" stroke-width="1.500" stroke-dasharray="1.500 1"/><path d="M1186 263h5l-2.500 2.500z" fill="#444"/>
<g transform="translate(1206,257) scale(.62)"><use href="#py"/></g><path d="M1211 263h5l-2.500 2.500z" fill="#444"/>
<circle cx="1231" cy="257" r="7.500" fill="#f4f4f4" stroke="#999" stroke-width="1.300"/><path d="M1231 252v5l3 3" fill="none" stroke="#999"/>
<g transform="translate(1256,257) scale(.72)"><use href="#doc"/></g>
<path d="M1273.500 250v14M1305.500 250v14" stroke="#d4d4d4"/>
<path d="M1281 251h12v8l-3 4-2-2-7-1z" fill="#f5d94c" stroke="#b99a2a"/><path d="M1288 264l6-9 1.500 1.500-5 9z" fill="#8a7a40"/>
<use href="#wr" x="1320" y="258"/>
<rect x="1166.500" y="273.500" width="340" height="24" rx="3" fill="#fff" stroke="#c0c0c0"/>
<circle cx="1179" cy="284" r="4" fill="none" stroke="#999" stroke-width="1.300"/><path d="M1182 287l4 4" stroke="#999" stroke-width="1.500"/>
<text x="1194" y="291" textLength="46" lengthAdjust="spacingAndGlyphs">wedge</text>
<path d="M1485 285l4-4h9v8h-9z" fill="#bbb"/><path d="M1490 283l4 4M1494 283l-4 4" stroke="#fff"/>
<rect x="1166" y="299" width="340.500" height="487" fill="#fff" stroke="#bcbcbc"/>
<rect x="1166" y="337" width="340" height="19" fill="#2e8bc6"/>
<use href="#ar" x="1174" y="306"/><use href="#ad" x="1176" y="326"/>
<circle cx="1197" cy="308" r="7" fill="#f4f4f4" stroke="#999" stroke-width="1.300"/><path d="M1197 304v4l3 3" fill="none" stroke="#999"/>
<circle cx="1197" cy="327" r="5" fill="none" stroke="#5d9a32" stroke-width="3"/><path d="M1198 328l5 5" stroke="#e07a28" stroke-width="2"/>
<circle cx="1217" cy="346" r="3.500" fill="none" stroke="#a8c8e4" stroke-width="2"/><path d="M1217 339v14M1210 346h14M1212 341l10 10M1222 341l-10 10" stroke="#a8c8e4" stroke-width="1.300"/><circle cx="1217" cy="346" r="2.500" fill="#2e8bc6"/>
<text x="1211" y="314" textLength="95" lengthAdjust="spacingAndGlyphs">Recently used</text>
<text x="1211" y="333" textLength="115" lengthAdjust="spacingAndGlyphs">Vector geometry</text>
<text x="1231" y="352" textLength="148" lengthAdjust="spacingAndGlyphs" style="fill:#fff">Create wedge buffers</text>

<!-- Status bar -->
<g>
<text class="s" x="588" y="806" textLength="60" lengthAdjust="spacingAndGlyphs">Coordinate</text>
<rect x="652.500" y="790.500" width="120" height="23" rx="3" fill="#fff" stroke="#bcbcbc"/>
<text class="s" x="661" y="806" textLength="100" lengthAdjust="spacingAndGlyphs">-23752.2,205606.0</text>
<path d="M779 795l3 3 2-2 2 3 3-2-2 4 2 2-3 1 1 4-5 1-3-5z" fill="#eee" stroke="#333"/><path d="M778 795l12 13" stroke="#333"/>
<text class="s" x="805" y="806" textLength="28" lengthAdjust="spacingAndGlyphs">Scale</text>
<rect x="837.500" y="790.500" width="96" height="23" rx="3" fill="#fff" stroke="#bcbcbc"/><path d="M913.500 791v22" stroke="#ccc"/><path d="M919 800h8l-4 4z" fill="#555"/>
<text class="s" x="841" y="806" textLength="29" lengthAdjust="spacingAndGlyphs">1:386</text>
<rect x="947" y="799" width="11" height="10" rx="1" fill="#666"/><path d="M949 799v-3a3.500 3.500 0 0 1 7 0v3" fill="none" stroke="#888" stroke-width="1.500"/>
<text class="s" x="967" y="806" textLength="53" lengthAdjust="spacingAndGlyphs">Magnifier</text>
<rect x="1024.500" y="790.500" width="96" height="23" rx="3" fill="#fff" stroke="#bcbcbc"/><path d="M1107.500 791v22M1107.500 802h13" stroke="#ccc"/><path d="M1110 799l4-4 4 4zM1110 805l4 4 4-4z" fill="#555"/>
<text class="s" x="1028" y="806" textLength="30" lengthAdjust="spacingAndGlyphs">100%</text>
<text class="s" x="1130" y="806" textLength="48" lengthAdjust="spacingAndGlyphs">Rotation</text>
<rect x="1187.500" y="790.500" width="93" height="23" rx="3" fill="#fff" stroke="#bcbcbc"/><path d="M1266.500 791v22M1266.500 802h14" stroke="#ccc"/><path d="M1269 799l4-4 4 4zM1269 805l4 4 4-4z" fill="#555"/>
<text class="s" x="1192" y="806" textLength="24" lengthAdjust="spacingAndGlyphs">0,0 °</text>
<rect x="1288.500" y="795.500" width="12" height="12" fill="#fff" stroke="#aaa"/><use href="#tick" x="1294.500" y="801.500"/>
<text class="s" x="1306" y="806" textLength="40" lengthAdjust="spacingAndGlyphs">Render</text>
<circle cx="1369" cy="802" r="6.500" fill="#ddd" stroke="#777"/><path d="M1362.500 802h13M1369 795.500v13M1364 798h10M1364 806h10" stroke="#777" stroke-width=".8"/>
<text class="s" x="1379" y="806" textLength="58" lengthAdjust="spacingAndGlyphs">EPSG:3763</text>
<path d="M1469 795c4 0 7 2.500 7 6s-3 6-7 6l1 3-4-3c-2-1-4-3-4-6 0-3.500 3-6 7-6z" fill="#555"/><path d="M1466 801h1M1469 801h1M1472 801h1" stroke="#fff" stroke-width="1.500"/>
<path d="M1505 806l-9 9M1505 810l-5 5M1505 814l-1 1" stroke="#ccc" stroke-dasharray="1 2"/>
</g>
</svg>
</body></html>
